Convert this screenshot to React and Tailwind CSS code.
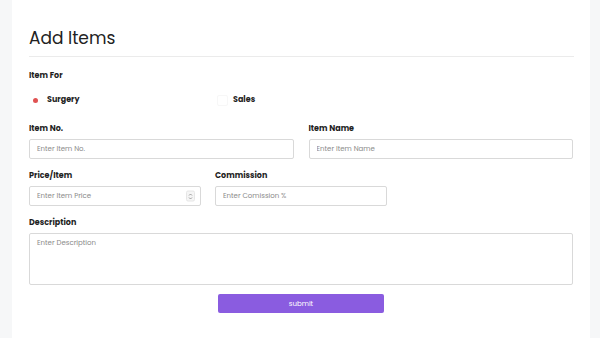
export default function App() {
    const label = "block text-[8px] leading-[10px] font-bold text-[#1f1f1f] mb-[5px]";
    const input =
        "block w-full h-[20px] border border-[#d9d9d9] rounded-[2px] px-[7px] text-[7px] text-[#333] placeholder:text-[#8a8a8a] outline-none bg-white";

    return (
        <div
            className="w-[600px] h-[338px] bg-[#f6f7f8] flex overflow-hidden"
            style={{ fontFamily: "Poppins, Inter, 'Liberation Sans', sans-serif" }}
        >
            <div className="ml-[12px] w-[578px] h-full bg-white px-[17px] pt-[26px]">
                <h2 className="text-[17px] leading-[24px] text-[#222] font-normal">Add Items</h2>
                <div className="mt-[6px] border-t border-[#ebebeb] mr-[-1px]" />

                <div className="mt-[14px]">
                    <span className={label}>Item For</span>
                    <div className="flex items-center mt-[12px] h-[14px]">
                        <div className="flex items-center w-[188px]">
                            <span className="w-[9px] h-[9px] rounded-full bg-white flex items-center justify-center ml-[2px]">
                                <span className="w-[5px] h-[5px] rounded-full bg-[#e05252]" />
                            </span>
                            <span className="ml-[7px] text-[8px] font-bold text-[#1f1f1f]">Surgery</span>
                        </div>
                        <div className="flex items-center">
                            <span className="w-[11px] h-[11px] border border-[#f7f7f7] rounded-[2px] bg-white" />
                            <span className="ml-[5px] text-[8px] font-bold text-[#1f1f1f]">Sales</span>
                        </div>
                    </div>
                </div>

                <div className="grid grid-cols-2 gap-x-[15px] mt-[17px]">
                    <div>
                        <label className={label}>Item No.</label>
                        <input className={input} placeholder="Enter Item No." />
                    </div>
                    <div>
                        <label className={label}>Item Name</label>
                        <input className={input} placeholder="Enter Item Name" />
                    </div>
                </div>

                <div className="grid grid-cols-3 gap-x-[14px] mt-[12px]">
                    <div>
                        <label className={label}>Price/Item</label>
                        <div className="relative">
                            <input className={input} placeholder="Enter Item Price" />
                            <span className="absolute right-[6px] top-1/2 -translate-y-1/2 w-[9px] h-[11px] rounded-[2px] border border-[#e6e6e6] bg-[#f5f5f5] flex items-center justify-center">
                                <svg width="5" height="8" viewBox="0 0 5 8" fill="none" stroke="#888" strokeWidth="0.8">
                                    <path d="M1 3 L2.5 1.5 L4 3" />
                                    <path d="M1 5 L2.5 6.5 L4 5" />
                                </svg>
                            </span>
                        </div>
                    </div>
                    <div>
                        <label className={label}>Commission</label>
                        <input className={input} placeholder="Enter Comission %" />
                    </div>
                    <div />
                </div>

                <div className="mt-[12px]">
                    <label className={label}>Description</label>
                    <textarea
                        className="w-full h-[52px] border border-[#d9d9d9] rounded-[2px] px-[7px] py-[4px] text-[7px] text-[#333] placeholder:text-[#8a8a8a] outline-none resize-none block"
                        placeholder="Enter Description"
                    />
                </div>

                <div className="flex justify-center mt-[9px]">
                    <button className="w-[166px] h-[19px] bg-[#8a5ce0] rounded-[2px] text-white text-[7px] leading-none">
                        submit
                    </button>
                </div>
            </div>
        </div>
    );
}
